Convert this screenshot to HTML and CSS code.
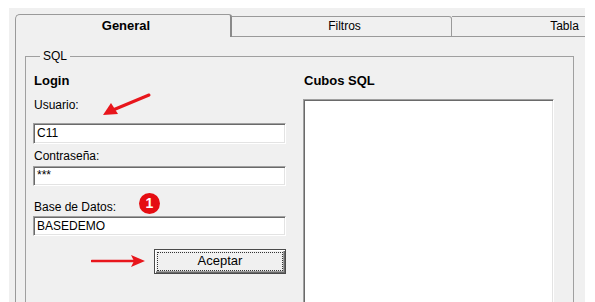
FILE: index.html
```html
<!DOCTYPE html>
<html>
<head>
	<title>SQL - General</title>
	<link rel="stylesheet" href="styles.css">
</head>
<body>
	<div class="window">
		<div class="tabs">
			<div class="tab active">General</div>
			<div class="tab">Filtros</div>
			<div class="tab">Tabla</div>
		</div>

		<div class="panel">
			<fieldset class="group">
				<legend>SQL</legend>
				<div class="cols">
					<div class="col-login">
						<div class="title">Login</div>
						<label class="lbl lbl-user">Usuario:</label>
						<div class="field field-user">C11</div>
						<label class="lbl lbl-pass">Contraseña:</label>
						<div class="field field-pass">***</div>
						<label class="lbl lbl-db">Base de Datos:</label>
						<div class="field field-db">BASEDEMO</div>
						<button class="btn"><span>Aceptar</span></button>
					</div>
					<div class="col-cubes">
						<div class="title">Cubos SQL</div>
						<div class="listbox"></div>
					</div>
				</div>
			</fieldset>
		</div>
	</div>

	<!-- annotations drawn over the screenshot -->
	<svg class="mark mark-user" width="52" height="26" viewBox="0 0 52 26">
		<line x1="48" y1="2" x2="12" y2="17" stroke="#e8161c" stroke-width="3" stroke-linecap="round"/>
		<polygon points="2,22 10,10 17,21" fill="#e8161c"/>
	</svg>
	<div class="badge">1</div>
	<svg class="mark mark-btn" width="56" height="14" viewBox="0 0 56 14">
		<line x1="1" y1="7" x2="44" y2="7" stroke="#e8161c" stroke-width="2.6" stroke-linecap="round"/>
		<polygon points="54,7 40,1 43,7 40,13" fill="#e8161c"/>
	</svg>
</body>
</html>
```

FILE: styles.css
```css
body {
	margin: 0;
	background-color: #fff;
	font-family: "Liberation Sans", Arial, sans-serif;
	color: #000;
	position: relative;
}

.window {
	margin: 8px 0 0 9px;
	width: 576px;
	height: 294px;
	background-color: #f0f0f0;
	overflow: hidden;
}

/* tab strip */
.tabs {
	display: flex;
	padding: 6px 0 0 6px;
	height: 23px;
}

.tab {
	flex-shrink: 0;
	box-sizing: border-box;
	width: 220px;
	height: 21px;
	margin-top: 2px;
	border: 1px solid #9a9a9a;
	border-left: none;
	border-radius: 0 3px 0 0;
	font-size: 12px;
	line-height: 18px;
	text-align: center;
	padding-left: 6px;
}

.tab.active {
	width: 217px;
	height: 23px;
	margin-top: 0;
	border-left: 1px solid #9a9a9a;
	border-right: 2px solid #8a8a8a;
	border-bottom: none;
	border-radius: 5px 3px 0 0;
	font-weight: bold;
	font-size: 13px;
	line-height: 22px;
	padding-left: 6px;
}

/* page below the tabs */
.panel {
	margin-left: 6px;
	border-left: 1px solid #9a9a9a;
	padding: 12px 0 0 9px;
	height: 300px;
}

.group {
	box-sizing: border-box;
	width: 549px;
	margin: 0;
	padding: 10px 0 0 7px;
	border: 1px solid #a0a0a0;
	height: 300px;
}

.group legend {
	margin-left: 7px;
	padding: 0 3px;
	font-size: 12px;
	line-height: 14px;
}

.cols {
	display: flex;
	gap: 17px;
}

.col-login {
	display: flex;
	flex-direction: column;
	width: 253px;
}

.title {
	font-weight: bold;
	font-size: 13px;
	line-height: 16px;
	padding-left: 1px;
}

.lbl {
	font-size: 12px;
	line-height: 14px;
	padding-left: 1px;
}

.lbl-user { margin-top: 9px; }
.lbl-pass { margin-top: 5px; }
.lbl-db { margin-top: 14px; }

.field {
	box-sizing: border-box;
	height: 21px;
	background-color: #fff;
	border: 1px solid;
	border-color: #a0a0a0 #fff #fff #a0a0a0;
	box-shadow: inset 1px 1px #6a6a6a, inset -1px -1px #e3e3e3;
	font-size: 12px;
	line-height: 19px;
	padding-left: 3px;
}

.field-user { margin-top: 11px; }
.field-pass { margin-top: 3px; height: 20px; line-height: 17px; }
.field-db { margin-top: 2px; height: 20px; line-height: 18px; }

.btn {
	align-self: flex-end;
	margin-top: 13px;
	width: 132px;
	height: 25px;
	padding: 2px;
	box-sizing: border-box;
	border: 1px solid #4a4a4a;
	background-color: #f0f0f0;
	box-shadow: inset 1px 1px #fff, inset -1px -1px #6a6a6a, inset -2px -2px #a0a0a0;
	font-family: "Liberation Sans", Arial, sans-serif;
	font-size: 13px;
}

.btn span {
	display: block;
	height: 17px;
	line-height: 16px;
	border: 1px dotted #333;
}

.col-cubes {
	width: 251px;
}

.listbox {
	margin-top: 10px;
	height: 220px;
	background-color: #fff;
	border: 1px solid;
	border-color: #a0a0a0 #fff #fff #a0a0a0;
	box-shadow: inset 1px 1px #6a6a6a, inset -1px -1px #e3e3e3;
}

/* red annotations */
.mark {
	position: absolute;
}

.mark-user {
	left: 101px;
	top: 93px;
}

.mark-btn {
	left: 91px;
	top: 254px;
}

.badge {
	position: absolute;
	left: 139px;
	top: 193px;
	width: 21px;
	height: 21px;
	border-radius: 50%;
	background-color: #e50d12;
	color: #fff;
	font-weight: bold;
	font-size: 14px;
	line-height: 21px;
	text-align: center;
}
```
